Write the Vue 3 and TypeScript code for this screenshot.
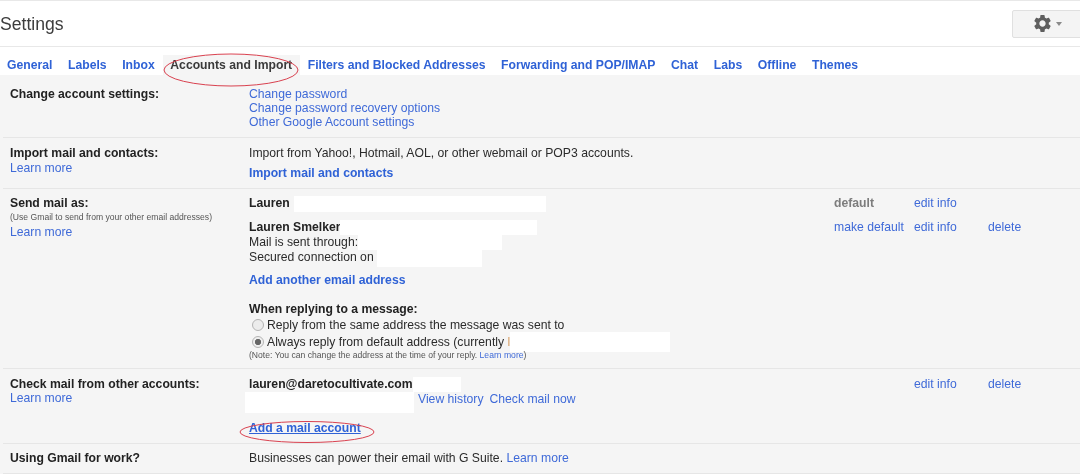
<template>
  <div class="page">
    <header class="title-bar">
      <h1 class="title">Settings</h1>
      <button class="gear-btn" type="button" aria-label="Settings menu">
        <svg class="gear" viewBox="0 0 24 24" width="21" height="21">
          <path
            fill="#5f5f5f"
            d="M19.14 12.94c.04-.3.06-.61.06-.94 0-.32-.02-.64-.07-.94l2.03-1.58a.49.49 0 0 0 .12-.61l-1.92-3.32a.488.488 0 0 0-.59-.22l-2.39.96c-.5-.38-1.03-.7-1.62-.94l-.36-2.54a.484.484 0 0 0-.48-.41h-3.84c-.24 0-.43.17-.47.41l-.36 2.54c-.59.24-1.13.57-1.62.94l-2.39-.96c-.22-.08-.47 0-.59.22L2.74 8.87c-.12.21-.08.47.12.61l2.03 1.58c-.05.3-.09.63-.09.94s.02.64.07.94l-2.03 1.58a.49.49 0 0 0-.12.61l1.92 3.32c.12.22.37.29.59.22l2.39-.96c.5.38 1.03.7 1.62.94l.36 2.54c.05.24.24.41.48.41h3.84c.24 0 .44-.17.47-.41l.36-2.54c.59-.24 1.13-.56 1.62-.94l2.39.96c.22.08.47 0 .59-.22l1.92-3.32c.12-.22.07-.47-.12-.61l-2.01-1.58zM12 15.6c-1.98 0-3.6-1.62-3.6-3.6s1.62-3.6 3.6-3.6 3.6 1.62 3.6 3.6-1.62 3.6-3.6 3.6z"
          />
        </svg>
        <span class="caret" />
      </button>
    </header>

    <nav class="tabs">
      <a v-for="tab in tabs" :key="tab" class="tab" :class="{ active: tab === activeTab }">{{ tab }}</a>
    </nav>

    <main class="settings">
      <section class="row row-account">
        <div class="label"><b>Change account settings:</b></div>
        <div class="content">
          <a class="link block">Change password</a>
          <a class="link block">Change password recovery options</a>
          <a class="link block">Other Google Account settings</a>
        </div>
      </section>

      <section class="row row-import">
        <div class="label">
          <b class="block">Import mail and contacts:</b>
          <a class="link block learn">Learn more</a>
        </div>
        <div class="content">
          <div>Import from Yahoo!, Hotmail, AOL, or other webmail or POP3 accounts.</div>
          <a class="link strong block add-import">Import mail and contacts</a>
        </div>
      </section>

      <section class="row row-send">
        <div class="label">
          <b class="block">Send mail as:</b>
          <div class="hint">(Use Gmail to send from your other email addresses)</div>
          <a class="link block">Learn more</a>
        </div>
        <div class="content">
          <div class="identity first">
            <div class="identity-main">
              <div class="line"><b>Lauren</b><span class="mask mask-name" /></div>
            </div>
            <span class="action muted">default</span>
            <a class="action link">edit info</a>
            <span class="action" />
          </div>
          <div class="identity">
            <div class="identity-main">
              <div class="line"><b>Lauren Smelker</b><span class="mask mask-full" /></div>
              <div class="line">Mail is sent through:<span class="mask mask-smtp" /></div>
              <div class="line">Secured connection on <span class="mask mask-port" /></div>
            </div>
            <a class="action link">make default</a>
            <a class="action link">edit info</a>
            <a class="action link">delete</a>
          </div>
          <a class="link strong block add-address">Add another email address</a>
          <b class="block reply-title">When replying to a message:</b>
          <div class="radio-line">
            <span class="radio" />Reply from the same address the message was sent to
          </div>
          <div class="radio-line">
            <span class="radio checked" />Always reply from default address (currently <span class="initial">l</span><span class="mask mask-reply" />
          </div>
          <div class="hint note">
            (Note: You can change the address at the time of your reply. <a class="link">Learn more</a>)
          </div>
        </div>
      </section>

      <section class="row row-check">
        <div class="label">
          <b class="block">Check mail from other accounts:</b>
          <a class="link block">Learn more</a>
        </div>
        <div class="content">
          <div class="identity">
            <div class="identity-main">
              <div class="line"><b>lauren@daretocultivate.com</b><span class="mask mask-mail" /></div>
            </div>
            <span class="action" />
            <a class="action link">edit info</a>
            <a class="action link">delete</a>
          </div>
          <div class="history">
            <span class="mask mask-history" />
            <a class="link">View history</a>
            <a class="link">Check mail now</a>
          </div>
          <a class="link strong block add-account">Add a mail account</a>
        </div>
      </section>

      <section class="row row-work">
        <div class="label"><b>Using Gmail for work?</b></div>
        <div class="content">
          Businesses can power their email with G Suite. <a class="link">Learn more</a>
        </div>
      </section>
    </main>

    <svg class="marks" width="1080" height="474" viewBox="0 0 1080 474">
      <ellipse cx="231" cy="70" rx="67" ry="16" />
      <ellipse cx="307" cy="432" rx="67" ry="10.5" />
    </svg>
  </div>
</template>

<script setup lang="ts">
const tabs: string[] = [
  "General",
  "Labels",
  "Inbox",
  "Accounts and Import",
  "Filters and Blocked Addresses",
  "Forwarding and POP/IMAP",
  "Chat",
  "Labs",
  "Offline",
  "Themes",
];
const activeTab = "Accounts and Import";
</script>

<style>
html,
body {
  margin: 0;
  overflow: hidden;
  background: #fff;
}
</style>

<style scoped>
.page {
  position: relative;
  width: 1080px;
  height: 474px;
  overflow: hidden;
  font-family: "Liberation Sans", Arial, sans-serif;
  font-size: 12.2px;
  line-height: 14.3px;
  color: #2b2b2b;
  background: #fff;
  filter: blur(0.3px);
}

.title-bar {
  display: flex;
  align-items: center;
  justify-content: space-between;
  box-sizing: border-box;
  height: 47px;
  border-top: 1px solid #e8e8e8;
  border-bottom: 1px solid #e8e8e8;
}

.title {
  margin: 0;
  font-size: 17.6px;
  font-weight: 400;
  line-height: 24px;
  color: #3c3c3c;
}

.gear-btn {
  display: flex;
  align-items: center;
  gap: 3px;
  box-sizing: border-box;
  width: 72px;
  height: 28px;
  margin-right: -4px;
  padding: 0 0 0 19px;
  background: #f4f4f4;
  border: 1px solid #e0e0e0;
  border-radius: 2px;
}

.caret {
  width: 0;
  height: 0;
  border-left: 3.5px solid transparent;
  border-right: 3.5px solid transparent;
  border-top: 4px solid #8a8a8a;
}

.tabs {
  display: flex;
  height: 28px;
  padding: 8px 0 0 0;
  box-sizing: border-box;
}

.tab {
  padding: 3px 7.8px 0 7.8px;
  color: #2f62d6;
  font-weight: 700;
}

.tab:first-child {
  padding-left: 7px;
}

.tab.active {
  color: #3a3a3a;
  background: #f5f5f5;
}

.settings {
  height: 399px;
  padding-left: 3px;
  background: #f5f5f5;
}

.row {
  display: grid;
  grid-template-columns: 246px 1fr;
  box-sizing: border-box;
  border-bottom: 1px solid #e6e6e6;
}

.label {
  padding-left: 7px;
}

.row-account {
  height: 63px;
  padding-top: 12px;
  line-height: 14px;
}

.row-import {
  height: 51px;
  padding-top: 8px;
}

.row-send {
  height: 180px;
  padding-top: 7px;
}

.row-check {
  height: 75px;
  padding-top: 8px;
}

.row-work {
  height: 30px;
  padding-top: 7px;
}

.block {
  display: block;
}

b {
  color: #222;
}

.link {
  color: #3f6ad8;
  cursor: pointer;
}

.strong {
  font-weight: 700;
  color: #2f62d6;
}

.learn {
  margin-top: 1px;
}

.add-import {
  margin-top: 6px;
}

.hint {
  font-size: 8.6px;
  line-height: 15px;
  color: #555;
}

.identity {
  display: flex;
}

.identity.first {
  margin-bottom: 8px;
}

.identity-main {
  width: 585px;
}

.action {
  width: 80px;
}

.action:last-child {
  width: 60px;
}

.action:nth-child(3) {
  width: 74px;
}

.muted {
  color: #7d7d7d;
  font-weight: 700;
}

.line {
  display: flex;
  white-space: pre;
}

.mask {
  display: inline-block;
  background: #fff;
}

.mask-name {
  width: 252px;
  height: 16px;
  margin-left: 4px;
}

.mask-full {
  width: 197px;
  height: 15px;
}

.mask-smtp {
  width: 144px;
  height: 15px;
}

.mask-port {
  width: 105px;
  height: 17px;
  margin-bottom: -3px;
}

.mask-reply {
  width: 160px;
  height: 20px;
  margin: -3px 0;
}

.initial {
  color: #d9a066;
}

.mask-mail {
  width: 48px;
  height: 15px;
}

.mask-history {
  width: 169px;
  height: 21px;
  margin-left: -4px;
}

.add-address {
  margin-top: 9px;
}

.reply-title {
  margin-top: 14px;
  margin-bottom: 1px;
}

.radio-line {
  display: flex;
  align-items: center;
  height: 17px;
  white-space: pre;
}

.radio {
  box-sizing: border-box;
  width: 12px;
  height: 12px;
  margin: 0 3px 0 3px;
  border: 1px solid #b4b4b4;
  border-radius: 50%;
  background: #ececec;
}

.radio.checked {
  background: radial-gradient(circle, #666 0 2.8px, #efefef 3.4px);
}

.note {
  line-height: 11px;
  margin-top: -1px;
}

.history {
  display: flex;
  align-items: flex-start;
  gap: 4px;
}

.history .link {
  margin-right: 2px;
}

.add-account {
  margin-top: 8px;
  text-decoration: underline;
}

.marks {
  position: absolute;
  top: 0;
  left: 0;
  pointer-events: none;
}

.marks ellipse {
  fill: none;
  stroke: #d9414f;
  stroke-width: 1;
}
</style>
